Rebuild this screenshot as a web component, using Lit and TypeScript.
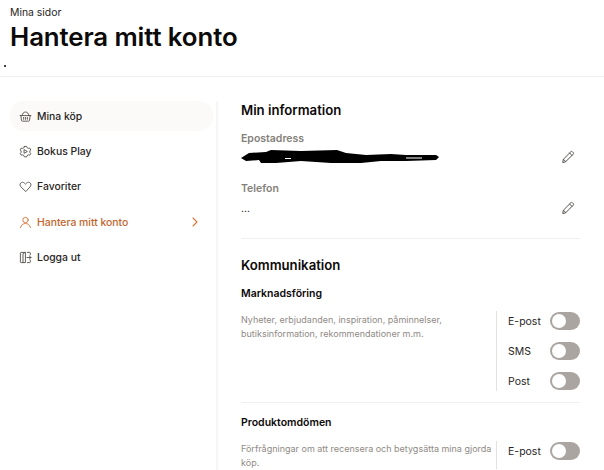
import { LitElement, html, css, svg } from "lit";
import { customElement } from "lit/decorators.js";

const icon = (body: unknown, cls = "ico") => html`<svg class=${cls} viewBox="0 0 14 14" fill="none" stroke="currentColor" stroke-width="1" stroke-linecap="round" stroke-linejoin="round">${body}</svg>`;

const basket = svg`<path d="M1.2 6h11.6M2 6l.7 5.2c.1.5.4.8.9.8h6.8c.5 0 .8-.3.9-.8L12 6"/><path d="M3.5 6c0-2.4 1.500-3.800 3.500-3.800S10.500 3.600 10.500 6"/><path d="M5 8v2M7 8v2M9 8v2"/>`;
const play = svg`<path d="M5.800 1.500h2.400l.5 1.400 1.500.8 1.400-.4 1.100 2-1 1.100v1.500l1 1.100-1.100 2-1.400-.4-1.500.8-.5 1.400H5.800l-.5-1.400-1.500-.8-1.400.4-1.100-2 1-1.100V6.400l-1-1.100 1.100-2 1.400.4 1.500-.8z"/><path d="M5.800 5.200 9 7 5.800 8.800z"/>`;
const heart = svg`<path d="M7 12.200 2 7.300C.8 6.100.8 4.300 1.900 3.200c1.100-1 2.800-1 3.900.1L7 4.400l1.200-1.100c1.100-1.100 2.800-1.100 3.900-.1 1.100 1.100 1.100 2.900-.1 4.100z"/>`;
const user = svg`<circle cx="7" cy="4.300" r="2.900"/><path d="M1.700 12.500c.5-2.800 2.600-4.400 5.300-4.400s4.800 1.600 5.300 4.400"/>`;
const logout = svg`<path d="M6.500 1.500H2.300c-.5 0-.8.300-.8.800v9.400c0 .5.3.8.8.8h4.200zM6.500 1.500 4.300 3v9.300M9 1.500h2.500c.5 0 .7.300.7.800v1.700M12.200 10v1.700c0 .5-.2.800-.7.800H9M8.500 7H13M11 5.200 13 7l-2 1.800"/>`;
const pencil = html`<svg class="pencil" viewBox="0 0 14 14" fill="none" stroke="currentColor" stroke-width="1" stroke-linejoin="round" stroke-linecap="round"><path d="M1.800 12.200l.6-3L9.800 1.800c.5-.5 1.200-.5 1.700 0l.7.700c.5.500.5 1.200 0 1.700L4.800 11.600z"/><path d="M8.600 3l2.400 2.400M2.400 9.200l2.400 2.400"/></svg>`;

@customElement("app-root")
export class AppRoot extends LitElement {
  static styles = css`
    :host { display: block; width: 604px; height: 470px; overflow: hidden; background: #fff; font-family: Inter, "Liberation Sans", sans-serif; color: #1c1917; }
    * { box-sizing: border-box; }
    header { height: 77px; padding: 6px 10px 0 0; border-bottom: 1px solid #efefef; }
    .crumb { font-size: 10.400px; line-height: 13px; margin-left: 10px; color: #292524; }
    h1 { margin: 2px 0 0 10px; font-size: 25.800px; line-height: 32px; font-weight: 600; color: #0c0a09; letter-spacing: -0.1px; }
    .dot { width: 2px; height: 2px; background: #000; margin: 12px 0 0 4px; border-radius: 50%; }
    .body { display: flex; padding: 24px 0 0 10px; }
    nav { width: 203px; display: flex; flex-direction: column; flex: none; }
    .item { height: 30px; margin-bottom: 5.450px; display: flex; align-items: center; gap: 5px; padding: 0 14px 0 9px; border-radius: 14px; font-size: 10.400px; font-weight: 500; color: #292524; }
    .item.sel { background: #fbfaf8; }
    .item.on { color: #c2652c; }
    .item .lbl { flex: 1; }
    .ico { width: 13px; height: 13px; flex: none; color: #57534e; }
    .on .ico { color: #d9773d; }
    .chev { width: 8px; height: 10px; flex: none; color: #d9773d; }
    .rule { width: 2px; margin-left: 3px; background: #f6f6f6; height: 400px; flex: none; }
    main { width: 339px; margin-left: 23px; flex: none; }
    h2 { margin: 0; font-size: 13.200px; line-height: 18px; font-weight: 600; color: #0c0a09; }
    .field-label { font-size: 10.500px; line-height: 14px; font-weight: 600; color: #857f7a; }
    .value { display: flex; justify-content: space-between; align-items: center; padding-right: 5px; }
    .scribble { width: 200px; height: 16px; display: block; }
    .dots { font-size: 10.500px; line-height: 16px; color: #292524; padding-top: 2px; }
    .pencil { width: 14px; height: 14px; color: #57534e; flex: none; }
    .sep { height: 1px; background: #efefef; }
    h3 { margin: 0; font-size: 10.500px; line-height: 14px; font-weight: 600; color: #0c0a09; }
    .row { display: flex; }
    .desc { flex: 1; font-size: 9px; line-height: 13.500px; color: #908a85; padding-right: 4px; }
    .desc.a { padding-top: 2px; }
    .desc.b { padding-top: 1px; }
    .opts { width: 84px; flex: none; border-left: 1px solid #e4e2e0; padding-left: 11px; display: flex; flex-direction: column; gap: 10px; }
    .opt { display: flex; align-items: center; justify-content: space-between; height: 20px; font-size: 10.500px; color: #292524; }
    .tog { width: 30px; height: 18px; border-radius: 9px; background: #aaa5a0; padding: 2px; flex: none; }
    .tog i { display: block; width: 14px; height: 14px; border-radius: 50%; background: #fff; }
    .m-email { margin-top: 13px; }
    .m-scribble { margin-top: 3px; }
    .m-phone { margin-top: 17px; }
    .m-phone-val { margin-top: 3px; }
    .m-sep1 { margin-top: 21px; }
    .m-h2 { margin-top: 17px; }
    .m-h3a { margin-top: 13px; }
    .m-row1 { margin-top: 10px; }
    .m-sep2 { margin-top: 11px; }
    .m-h3b { margin-top: 13px; }
    .m-row2 { margin-top: 11px; }
  `;

  render() {
    const toggle = (l: string) => html`<div class="opt"><span>${l}</span><div class="tog"><i></i></div></div>`;
    const items: [string, unknown, string][] = [
      ["Mina köp", basket, "sel"], ["Bokus Play", play, ""], ["Favoriter", heart, ""],
      ["Hantera mitt konto", user, "on"], ["Logga ut", logout, ""],
    ];
    return html`
      <header>
        <div class="crumb">Mina sidor</div>
        <h1>Hantera mitt konto</h1>
        <div class="dot"></div>
      </header>
      <div class="body">
        <nav>
          ${items.map(([l, i, c]) => html`<div class="item ${c}">${icon(i)}<span class="lbl">${l}</span>${c === "on" ? html`<svg class="chev" viewBox="0 0 8 10" fill="none" stroke="currentColor" stroke-width="1.100" stroke-linecap="round" stroke-linejoin="round"><path d="M2 1l4 4-4 4"/></svg>` : ""}</div>`)}
        </nav>
        <div class="rule"></div>
        <main>
          <h2>Min information</h2>
          <div class="field-label m-email">Epostadress</div>
          <div class="value m-scribble">
            <svg class="scribble" viewBox="0 0 200 16"><path fill="#000" d="M0 9 8 4 25 3 30 1 60 2 96 1 105 4 125 6 150 5 165 6 195 6 198 8 195 11 165 12 140 12 120 14 90 14 60 12 35 14 20 14 18 11 5 12Z"/><path fill="#fff" d="M44 9h6v1h-6zM165 8.500h16v1h-16z"/></svg>
            ${pencil}
          </div>
          <div class="field-label m-phone">Telefon</div>
          <div class="value m-phone-val"><span class="dots">...</span>${pencil}</div>
          <div class="sep m-sep1"></div>
          <h2 class="m-h2">Kommunikation</h2>
          <h3 class="m-h3a">Marknadsföring</h3>
          <div class="row m-row1">
            <div class="desc a">Nyheter, erbjudanden, inspiration, påminnelser,<br>butiksinformation, rekommendationer m.m.</div>
            <div class="opts">${toggle("E-post")}${toggle("SMS")}${toggle("Post")}</div>
          </div>
          <div class="sep m-sep2"></div>
          <h3 class="m-h3b">Produktomdömen</h3>
          <div class="row m-row2">
            <div class="desc b">Förfrågningar om att recensera och betygsätta mina gjorda köp.</div>
            <div class="opts">${toggle("E-post")}</div>
          </div>
        </main>
      </div>
    `;
  }
}
